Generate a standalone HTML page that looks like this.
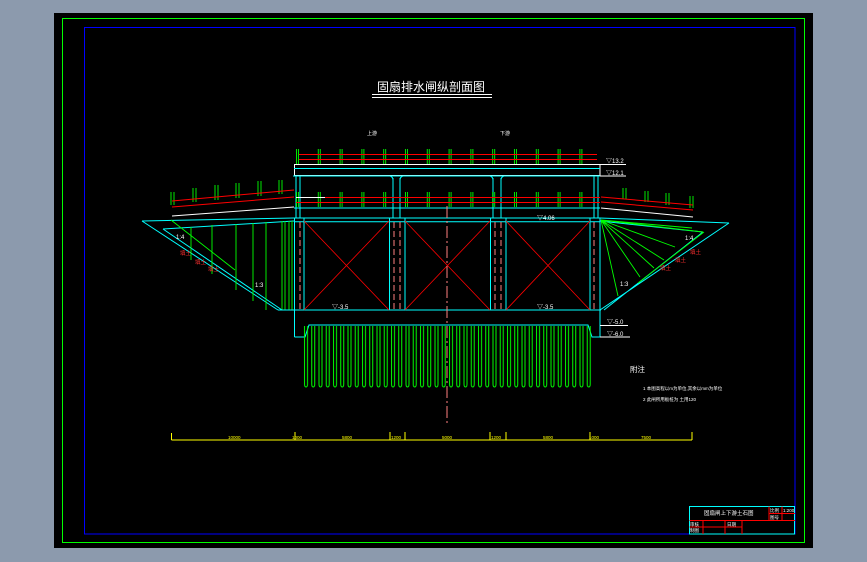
<!DOCTYPE html>
<html><head><meta charset="utf-8"><style>
html,body{margin:0;padding:0;background:#8c9aad;width:867px;height:562px;overflow:hidden}
svg{display:block}
text{font-family:"Liberation Sans","Noto Sans CJK SC",sans-serif;fill:#fff}
</style></head><body>
<svg width="867" height="562" viewBox="0 0 867 562" xmlns="http://www.w3.org/2000/svg">
<defs>
<pattern id="piles" x="303" y="0" width="7.25" height="562" patternUnits="userSpaceOnUse">
<path d="M1.5 326V384Q1.5 387 3 387Q4.5 387 4.5 384V326" stroke="#00ff00" fill="none" stroke-width="1"/>
</pattern>
<pattern id="posts" x="294" y="0" width="21.8" height="562" patternUnits="userSpaceOnUse">
<path d="M2.5 562V2Q3.5 0 4.5 2V562" fill="none" stroke="#00ff00" stroke-width="0.9"/>
</pattern>
</defs>
<rect x="54" y="13" width="759" height="535" fill="#000"/>
<rect x="62.5" y="18.5" width="742" height="524" fill="none" stroke="#00ff00" stroke-width="1"/>
<rect x="84.5" y="27.5" width="710.5" height="506.5" fill="none" stroke="#0000ff" stroke-width="1"/>

<text x="377" y="91" font-size="12" textLength="108" lengthAdjust="spacingAndGlyphs">固扇排水闸纵剖面图</text>
<line x1="372" y1="94.5" x2="492" y2="94.5" stroke="#fff"/>
<line x1="372" y1="97.5" x2="492" y2="97.5" stroke="#fff"/>
<text x="367" y="135" font-size="5">上游</text>
<text x="500" y="135" font-size="5">下游</text>

<rect x="296" y="149" width="302" height="15" fill="url(#posts)"/>
<line x1="299" y1="154.5" x2="597" y2="154.5" stroke="#ff0000"/>
<line x1="299" y1="159.5" x2="597" y2="159.5" stroke="#ff0000"/>
<rect x="294.5" y="164.5" width="305.5" height="11" fill="none" stroke="#fff"/>
<line x1="294" y1="168.5" x2="600" y2="168.5" stroke="#00ffff"/>
<line x1="293" y1="176" x2="601" y2="176" stroke="#00ffff"/>
<g stroke="#00ffff" fill="none">
<path d="M296 176V218M300 176V218M393 178V218M400 178V218M493 178V218M501 178V218M594 176V218M598 176V218"/>
<path d="M390 176Q393 177 393 180M403 176Q400 177 400 180M490 176Q493 177 493 180M504 176Q501 177 501 180"/>
</g>
<rect x="296" y="192" width="302" height="15" fill="url(#posts)"/>
<line x1="296" y1="197.5" x2="600" y2="197.5" stroke="#ff0000"/>
<line x1="296" y1="202.5" x2="600" y2="202.5" stroke="#ff0000"/>
<line x1="296" y1="197.5" x2="325" y2="197.5" stroke="#fff"/>
<line x1="294" y1="208" x2="600" y2="208" stroke="#00ffff"/>
<g stroke="#00ff00" fill="none" stroke-width="0.9">
<path d="M171 205V192M193 202V188M215 200V185M236 198V183M258 196V181M279 194V180M174 205V192M196 202V188M218 200V185M239 198V183M261 196V181M282 194V180"/>
<path d="M623 199V188M645 202V191M666 205V193M690 208V196M626 199V188M648 202V191M669 205V193M693 208V196"/>
</g>
<path d="M172 207L294 197M172 201L294 190" stroke="#ff0000"/>
<path d="M172 216L294 207" stroke="#fff"/>
<path d="M601 197L693 205M601 202L693 210" stroke="#ff0000"/>
<path d="M601 208L693 217" stroke="#fff"/>

<g stroke="#00ffff" fill="none" stroke-width="1">
<path d="M142 221L294 218M163 229L294 221M142 221L278 310M163 229L282 310"/>
<path d="M600 218L729 223M600 221L703 232M729 223L600 310M703 232L604 310"/>
</g>
<g stroke="#00ff00" fill="none" stroke-width="0.9">
<path d="M191 227V260M212 225V274M236 224V290M253 223V301M266 222V310M282 221V310M285 221V310M289 221V310M292 221V310"/>
<path d="M171 220L235 270"/>
<path d="M601 220L618 296M601 220L640 277M601 220L654 268M601 220L675 247M601 220L703 232M601 220L692 228M601 220L664 260"/>
<path d="M638 283L704 232"/>
</g>
<text x="176" y="239" font-size="6">1:4</text>
<text x="255" y="287" font-size="6">1:3</text>
<text x="685" y="240" font-size="6">1:4</text>
<text x="620" y="286" font-size="6">1:3</text>
<g font-size="5.5"><text x="180" y="255" style="fill:#ff3030">填土</text><text x="195" y="264" style="fill:#ff3030">填土</text><text x="208" y="271" style="fill:#ff3030">填土</text><text x="660" y="270" style="fill:#ff3030">填土</text><text x="675" y="262" style="fill:#ff3030">填土</text><text x="690" y="254" style="fill:#ff3030">填土</text></g>

<g stroke="#00ffff" fill="none">
<path d="M294 218H600M294 221.7H600"/>
<path d="M294.5 218V337M304 218V310M389.5 218V310M405 218V310M490.5 218V310M506 218V310M590 218V310M600 218V337"/>
<path d="M278 310H601M294.5 337H305L309 325H588L592 337H600"/>
</g>
<g stroke="#ff0000" stroke-width="0.8">
<path d="M304 221L389 310M389 221L304 310M405 221L490 310M490 221L405 310M506 221L590 310M590 221L506 310"/>
</g>
<g stroke="#ff8080" stroke-width="1" stroke-dasharray="6 3" fill="none">
<path d="M300 222V310M394 222V310M400 222V310M495 222V310M501 222V310M594 222V310"/>
<path d="M447 206V425" stroke-dasharray="12 3 2 3"/>
</g>
<rect x="303" y="325" width="290" height="63" fill="url(#piles)"/>
<text x="332" y="309" font-size="6">▽-3.5</text>
<text x="537" y="309" font-size="6">▽-3.5</text>
<text x="537" y="220" font-size="6">▽4.06</text>
<g stroke="#fff" fill="none"><path d="M600 164.5H626M600 176H626M600 325.5H628M600 337H630"/></g>
<text x="606" y="163" font-size="6">▽13.2</text>
<text x="606" y="175" font-size="6">▽12.1</text>
<text x="607" y="324" font-size="6">▽-5.0</text>
<text x="607" y="336" font-size="6">▽-6.0</text>

<text x="630" y="372" font-size="7.5">附注</text>
<text x="643" y="390" font-size="4.5">1 本图高程以m为单位,其余以mm为单位</text>
<text x="643" y="401" font-size="4.5">2 此闸所用板桩为 土用120</text>

<g stroke="#ffff00" fill="none">
<path d="M171.5 440H692M171.5 433V440M295 432V440M390 432V440M405 432V440M490 432V440M506 432V440M590 432V440M692 432V440"/>
</g>
<g font-size="4.5">
<text x="228" y="439" style="fill:#ffff00">10000</text>
<text x="292" y="439" style="fill:#ffff00">1000</text>
<text x="342" y="439" style="fill:#ffff00">5800</text>
<text x="391" y="439" style="fill:#ffff00">1200</text>
<text x="442" y="439" style="fill:#ffff00">5000</text>
<text x="491" y="439" style="fill:#ffff00">1200</text>
<text x="543" y="439" style="fill:#ffff00">5800</text>
<text x="589" y="439" style="fill:#ffff00">1000</text>
<text x="641" y="439" style="fill:#ffff00">7500</text>
</g>

<rect x="689.5" y="506.5" width="105" height="27.5" fill="none" stroke="#00ffff"/>
<g stroke="#ff0000" fill="none">
<path d="M689.5 520.5H795M689.5 527H742M703 520.5V534M725 520.5V534M742 520.5V534M769 506.5V520.5M782 506.5V520.5M769 513.5H795"/>
</g>
<text x="704" y="515" font-size="5.5">固扇闸上下游土石图</text>
<text x="770" y="512" font-size="4.5">比例</text>
<text x="783" y="512" font-size="4.5">1:200</text>
<text x="770" y="519" font-size="4.5">图号</text>
<text x="690" y="526" font-size="4.5">审核</text>
<text x="690" y="532" font-size="4.5">制图</text>
<text x="727" y="526" font-size="4.5">日期</text>
</svg>
</body></html>
